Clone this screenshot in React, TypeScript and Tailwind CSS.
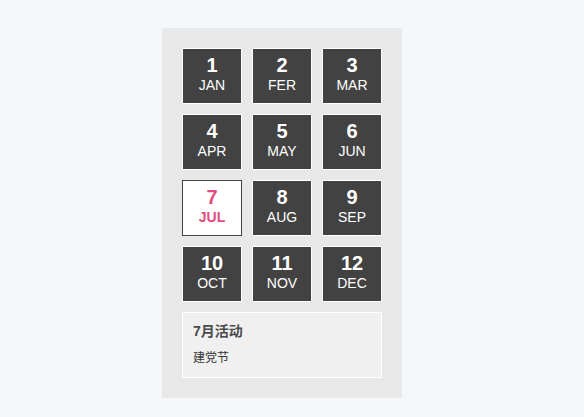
import React from "react";

const months = [
  ["1", "JAN"], ["2", "FER"], ["3", "MAR"],
  ["4", "APR"], ["5", "MAY"], ["6", "JUN"],
  ["7", "JUL"], ["8", "AUG"], ["9", "SEP"],
  ["10", "OCT"], ["11", "NOV"], ["12", "DEC"],
];

export default function App() {
  return (
    <div
      className="min-h-[417px] w-full bg-[#f4f7fa] pt-[28px]"
      style={{ fontFamily: '"Liberation Sans", Arial, "Noto Sans CJK SC", sans-serif' }}
    >
      <div className="ml-[162px] w-[240px] bg-[#e8e8e8] p-[20px]">
        <div className="grid grid-cols-[60px_60px_60px] gap-[10px]">
          {months.map(([n, m]) => {
            const sel = n === "7";
            return (
              <div
                key={n}
                className={
                  sel
                    ? "flex h-[56px] flex-col items-center border border-[#444444] bg-white pt-[5px] text-[#e54a7e]"
                    : "flex h-[56px] flex-col items-center border border-white bg-[#424242] pt-[5px] text-white"
                }
              >
                <div className="text-[20px] font-bold leading-[22px]">{n}</div>
                <div className={sel ? "text-[14px] font-bold leading-[18px]" : "text-[14px] leading-[18px]"}>{m}</div>
              </div>
            );
          })}
        </div>
        <div className="mt-[10px] h-[66px] border border-white bg-[#f0f0f0] px-[10px] pt-[10px]">
          <div className="text-[14px] font-bold leading-[16px] text-[#4a4a4a]">7月活动</div>
          <div className="mt-[10px] text-[12px] leading-[18px] text-[#333333]">建党节</div>
        </div>
      </div>
    </div>
  );
}
